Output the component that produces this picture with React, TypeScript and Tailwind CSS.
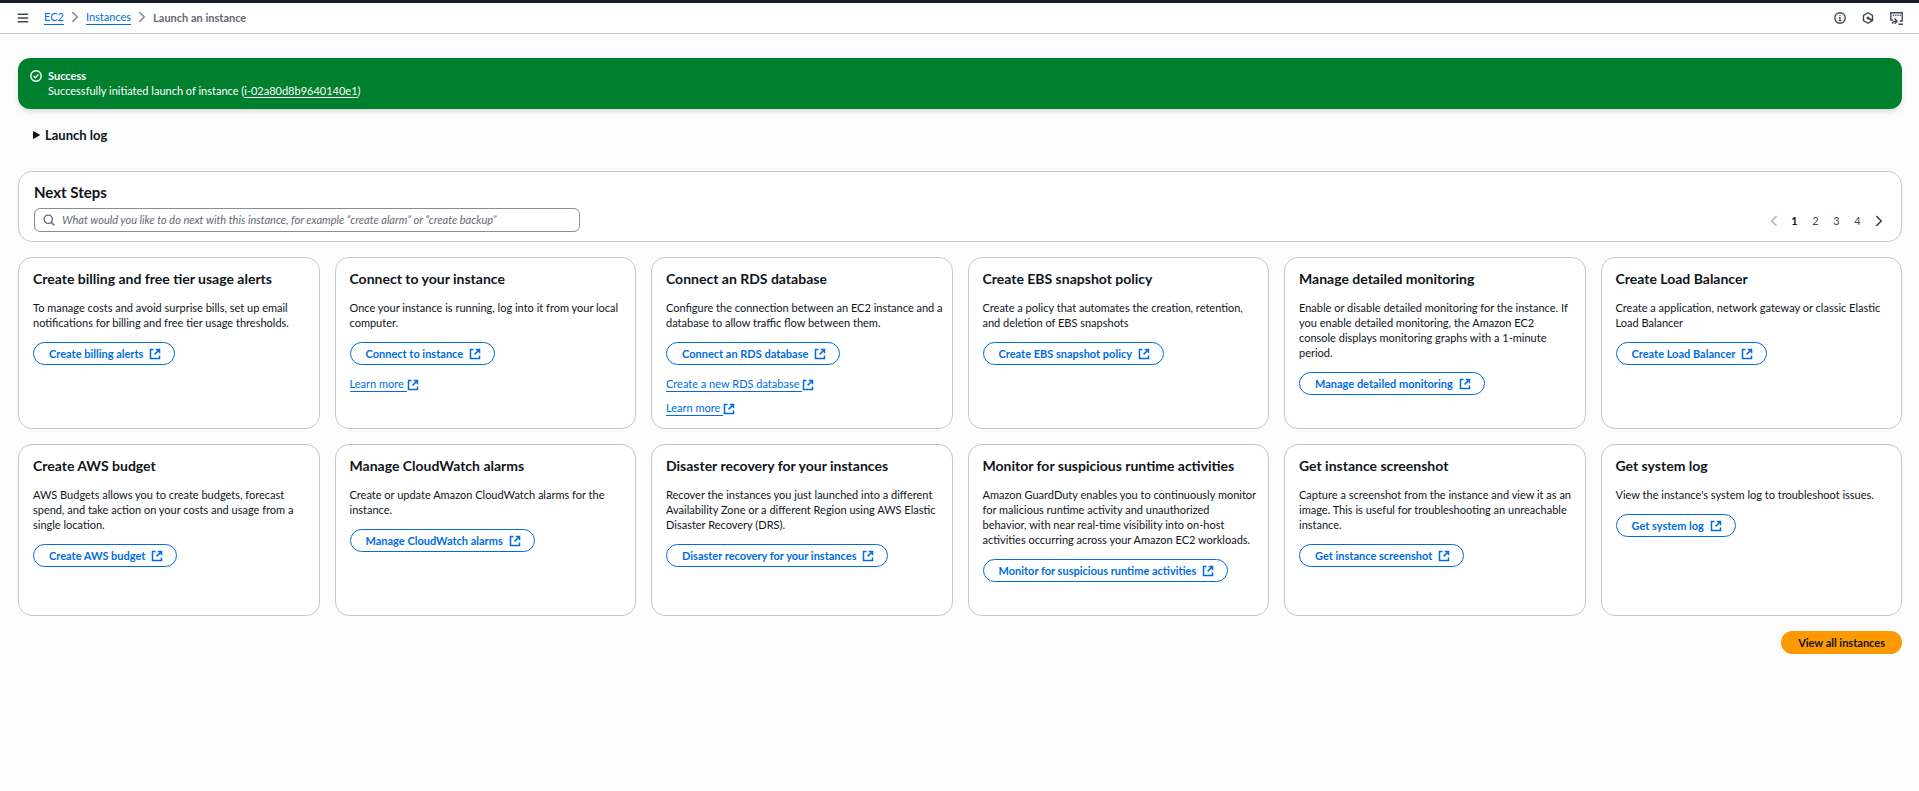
import type { ReactNode } from "react";

type Card = { title: string; body: string; action: string; links?: string[] };

const cards: Card[] = [
  {
    title: "Create billing and free tier usage alerts",
    body: "To manage costs and avoid surprise bills, set up email notifications for billing and free tier usage thresholds.",
    action: "Create billing alerts",
  },
  {
    title: "Connect to your instance",
    body: "Once your instance is running, log into it from your local computer.",
    action: "Connect to instance",
    links: ["Learn more"],
  },
  {
    title: "Connect an RDS database",
    body: "Configure the connection between an EC2 instance and a database to allow traffic flow between them.",
    action: "Connect an RDS database",
    links: ["Create a new RDS database", "Learn more"],
  },
  {
    title: "Create EBS snapshot policy",
    body: "Create a policy that automates the creation, retention, and deletion of EBS snapshots",
    action: "Create EBS snapshot policy",
  },
  {
    title: "Manage detailed monitoring",
    body: "Enable or disable detailed monitoring for the instance. If you enable detailed monitoring, the Amazon EC2\nconsole displays monitoring graphs with a 1-minute\nperiod.",
    action: "Manage detailed monitoring",
  },
  {
    title: "Create Load Balancer",
    body: "Create a application, network gateway or classic Elastic Load Balancer",
    action: "Create Load Balancer",
  },
  {
    title: "Create AWS budget",
    body: "AWS Budgets allows you to create budgets, forecast spend, and take action on your costs and usage from a single location.",
    action: "Create AWS budget",
  },
  {
    title: "Manage CloudWatch alarms",
    body: "Create or update Amazon CloudWatch alarms for the instance.",
    action: "Manage CloudWatch alarms",
  },
  {
    title: "Disaster recovery for your instances",
    body: "Recover the instances you just launched into a different Availability Zone or a different Region using AWS Elastic Disaster Recovery (DRS).",
    action: "Disaster recovery for your instances",
  },
  {
    title: "Monitor for suspicious runtime activities",
    body: "Amazon GuardDuty enables you to continuously monitor for malicious runtime activity and unauthorized\nbehavior, with near real-time visibility into on-host\nactivities occurring across your Amazon EC2 workloads.",
    action: "Monitor for suspicious runtime activities",
  },
  {
    title: "Get instance screenshot",
    body: "Capture a screenshot from the instance and view it as an image. This is useful for troubleshooting an unreachable instance.",
    action: "Get instance screenshot",
  },
  {
    title: "Get system log",
    body: "View the instance's system log to troubleshoot issues.",
    action: "Get system log",
  },
];

function Icon({ children, className = "size-3" }: { children: ReactNode; className?: string }) {
  return (
    <svg
      viewBox="0 0 16 16"
      className={`shrink-0 ${className}`}
      fill="none"
      stroke="currentColor"
      strokeWidth="2"
      aria-hidden="true"
    >
      {children}
    </svg>
  );
}

function External() {
  return (
    <Icon>
      <path d="M6 2H2v12h12v-4" />
      <path d="M9 2h5v5M14 2 7.5 8.5" />
    </Icon>
  );
}

function ChevronRight({ className }: { className?: string }) {
  return (
    <Icon className={className}>
      <path d="m4.5 1.5 6.5 6.5-6.5 6.5" />
    </Icon>
  );
}

function StepCard({ card }: { card: Card }) {
  return (
    <section className="flex flex-col items-start gap-3 rounded-[14px] border border-[#c6c6cd] bg-white py-3 pr-[6px] pl-[14px]">
      <h3 className="text-[14px] leading-[18px] font-bold">{card.title}</h3>
      <p className="whitespace-pre-line">{card.body}</p>
      <button
        type="button"
        className="flex h-[23px] items-center gap-[6px] rounded-full border border-[#006ce0] bg-white pr-[13px] pl-[15px] font-bold text-[#006ce0]"
      >
        {card.action}
        <External />
      </button>
      {card.links && (
        <div className="flex flex-col gap-[9px]">
          {card.links.map((link) => (
            <a key={link} href="#" className="flex items-center text-[#006ce0]">
              <span className="border-b border-[#006ce0] pr-[3px] leading-[14px]">{link}</span>
              <External />
            </a>
          ))}
        </div>
      )}
    </section>
  );
}

export default function App() {
  return (
    <div className="min-h-screen bg-[#fcfcfd] font-[Lato,'Open_Sans',sans-serif] text-[11px] leading-[15px] text-[#0f141a]">
      <header className="flex h-[34px] items-center justify-between border-t-[3px] border-b border-t-[#161d26] border-b-[#c6c6cd] bg-white pr-4 pl-[17px] text-[#424650]">
        <div className="flex items-center">
          <button type="button" aria-label="Open navigation" className="mr-[15px]">
            <Icon>
              <path d="M1 3h14M1 8h14M1 13h14" />
            </Icon>
          </button>
          <nav aria-label="Breadcrumb" className="flex items-center gap-[5px] pb-[2px]">
            <a href="#" className="border-b border-[#006ce0] leading-[14px] text-[#006ce0]">EC2</a>
            <ChevronRight className="size-3 text-[#8c8c94]" />
            <a href="#" className="border-b border-[#006ce0] leading-[14px] text-[#006ce0]">Instances</a>
            <ChevronRight className="size-3 text-[#8c8c94]" />
            <span aria-current="page" className="font-bold text-[#656871]">Launch an instance</span>
          </nav>
        </div>
        <div className="flex items-center gap-4">
          <button type="button" aria-label="Info">
            <Icon>
              <circle cx="8" cy="8" r="7" strokeWidth="1.8" />
              <path d="M8 3.8v2M6.5 7.6H8v4M6.2 11.4h3.6" strokeWidth="1.6" />
            </Icon>
          </button>
          <button type="button" aria-label="Amazon Q">
            <Icon>
              <path d="M8 1 14 4.5v7L8 15l-6-3.5v-7z" strokeWidth="1.8" strokeLinejoin="round" />
              <path d="m8 8 5.5 3.2" strokeWidth="2.4" />
              <circle cx="8" cy="8" r="2" fill="currentColor" stroke="none" />
            </Icon>
          </button>
          <button type="button" aria-label="CloudShell">
            <Icon className="size-[13px]">
              <path d="M4 10H1V1h14v10h-3" strokeWidth="1.7" />
              <path d="M3.5 4h1.6M6.3 4h1.6M9.1 4h1.6M11.9 4h1.4" strokeWidth="1.6" />
              <path d="M3 14.5c0-2.4 1-3.2 4.8-3.2M5.6 8l3.2 3.3-3.2 3.2M10.5 15H16" strokeWidth="1.7" />
            </Icon>
          </button>
        </div>
      </header>

      <main className="pt-6 pr-[17px] pb-10 pl-[18px]">
        <div role="status" className="flex gap-[6px] rounded-xl bg-[#00802f] px-3 pt-[10px] pb-[11px] text-white shadow-md">
          <Icon className="mt-[2px] size-3">
            <circle cx="8" cy="8" r="7" strokeWidth="1.8" />
            <path d="m4.8 8 2.4 2.4 4-4.4" strokeWidth="1.8" />
          </Icon>
          <div>
            <p className="font-bold">Success</p>
            <p>
              Successfully initiated launch of instance (
              <a href="#" className="border-b border-white">i-02a80d8b9640140e1</a>)
            </p>
          </div>
        </div>

        <button type="button" className="mt-[18px] ml-[15px] flex items-center gap-[5px] text-[13px] leading-4 font-bold">
          <svg viewBox="0 0 7 8" className="h-2 w-[7px]" fill="currentColor" aria-hidden="true">
            <path d="M0 0.6Q0 0 0.6 0.2L6.6 3.6Q7 4 6.6 4.4L0.6 7.8Q0 8 0 7.4z" />
          </svg>
          Launch log
        </button>

        <section className="mt-7 flex items-end justify-between rounded-[14px] border border-[#c6c6cd] bg-white pt-[11px] pr-3 pb-[9px] pl-[15px]">
          <div className="w-full max-w-[546px]">
            <h2 className="text-[15px] leading-[18px] font-bold">
              <label htmlFor="next-steps">Next Steps</label>
            </h2>
            <div className="mt-[7px] flex h-6 items-center gap-[7px] rounded-md border border-[#8c8c94] bg-white px-2 text-[#656871]">
              <Icon>
                <circle cx="7" cy="7" r="5.5" strokeWidth="1.8" />
                <path d="m11 11 4 4" />
              </Icon>
              <input
                id="next-steps"
                type="search"
                placeholder="What would you like to do next with this instance, for example “create alarm” or “create backup”"
                className="min-w-0 flex-1 bg-transparent pb-[2px] outline-none placeholder:text-[#656871] placeholder:italic"
              />
            </div>
          </div>
          <nav aria-label="Pagination" className="mb-1 flex items-center text-[#424650]">
            <button type="button" disabled aria-label="Previous page" className="flex w-[21px] justify-center text-[#b4b4bb]">
              <ChevronRight className="size-3 rotate-180" />
            </button>
            <button type="button" aria-current="page" className="w-[21px] font-bold text-[#0f141a]">1</button>
            <button type="button" className="w-[21px]">2</button>
            <button type="button" className="w-[21px]">3</button>
            <button type="button" className="w-[21px]">4</button>
            <button type="button" aria-label="Next page" className="flex w-[21px] justify-center">
              <ChevronRight className="size-3" />
            </button>
          </nav>
        </section>

        <div className="mt-[15px] grid auto-rows-fr grid-cols-1 gap-[15px] sm:grid-cols-2 lg:grid-cols-3 2xl:grid-cols-6">
          {cards.map((card) => (
            <StepCard key={card.title} card={card} />
          ))}
        </div>

        <div className="mt-[15px] flex justify-end">
          <button type="button" className="h-[23px] rounded-full bg-[#ff9900] px-[17px] font-bold">
            View all instances
          </button>
        </div>
      </main>
    </div>
  );
}
